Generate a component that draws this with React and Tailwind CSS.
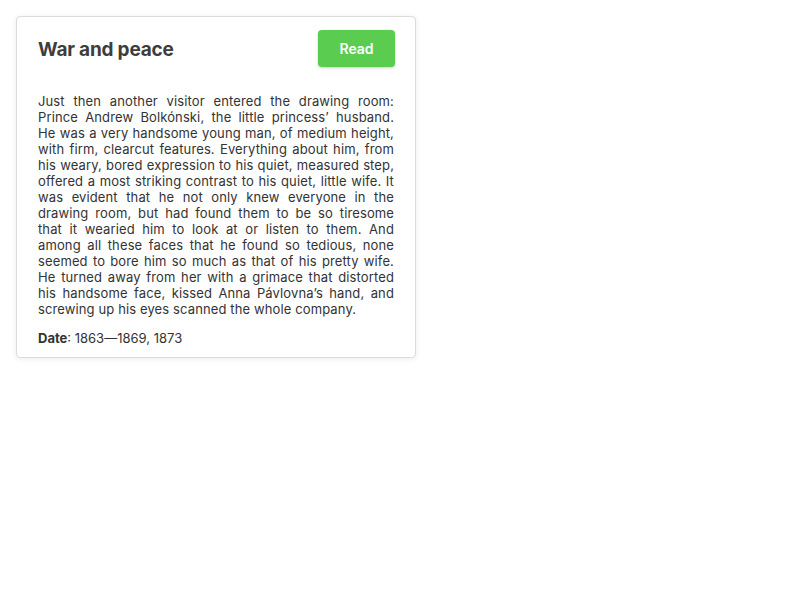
import React from 'react';

const text =
    'Just then another visitor entered the drawing room: Prince Andrew Bolkónski, the little princess’ husband. He was a very handsome young man, of medium height, with firm, clearcut features. Everything about him, from his weary, bored expression to his quiet, measured step, offered a most striking contrast to his quiet, little wife. It was evident that he not only knew everyone in the drawing room, but had found them to be so tiresome that it wearied him to look at or listen to them. And among all these faces that he found so tedious, none seemed to bore him so much as that of his pretty wife. He turned away from her with a grimace that distorted his handsome face, kissed Anna Pávlovna’s hand, and screwing up his eyes scanned the whole company.';

export default function App() {
    return (
        <div className="p-4 font-['Inter',sans-serif] text-[#333]">
            <div className="w-[400px] bg-white border border-[#dcdcdc] rounded-[4px] shadow-[0_1px_6px_rgba(0,0,0,0.08)]">
                <div className="flex items-center justify-between pl-[21px] pr-[20px] pt-[13px] pb-[26px]">
                    <h2 className="text-[19px] font-bold text-[#3d3d3d] tracking-[-0.2px] pt-[3px]">War and peace</h2>
                    <button className="w-[77px] h-[37px] bg-[#5acd50] text-white text-[14px] font-semibold rounded-[4px] shadow-[0_1px_3px_rgba(0,0,0,0.2)]">
                        Read
                    </button>
                </div>
                <div className="px-[21px] pb-[11px]">
                    <p className="text-[13px] leading-[16px] text-justify tracking-[0.12px]">{text}</p>
                    <p className="text-[13px] leading-[16px] mt-[13px]">
                        <span className="font-bold">Date</span>: 1863—1869, 1873
                    </p>
                </div>
            </div>
        </div>
    );
}
